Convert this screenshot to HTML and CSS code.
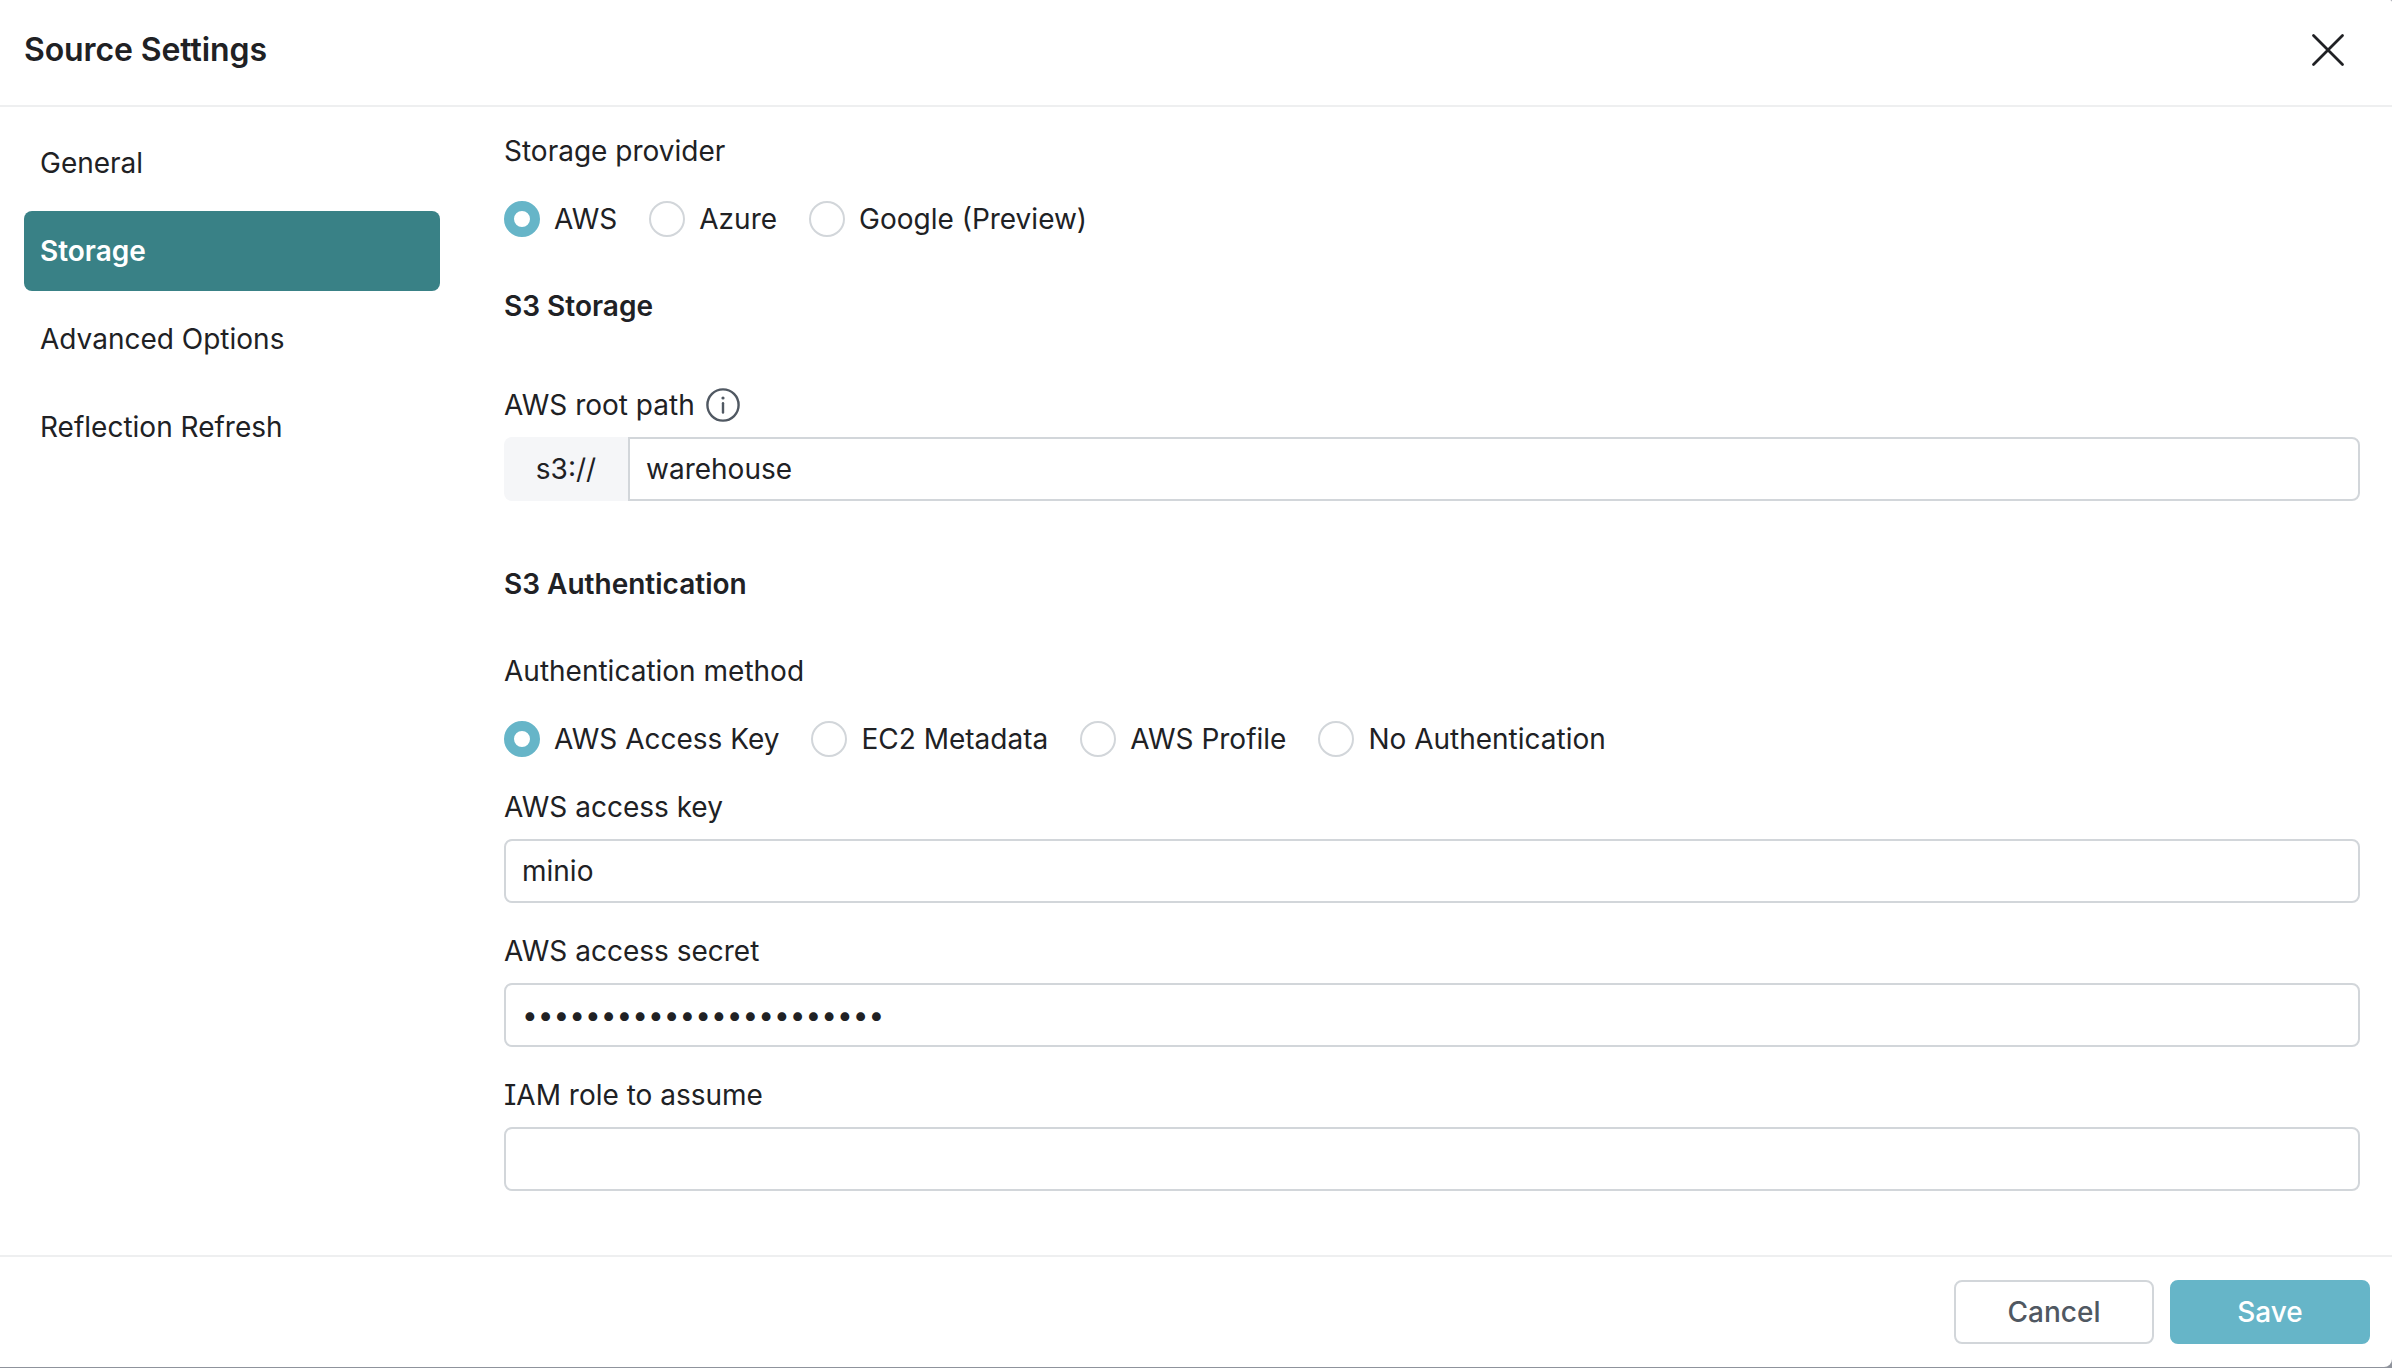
FILE: index.html
```html
<!DOCTYPE html>
<html lang="en">
<head>
<meta charset="utf-8">
<title>Source Settings</title>
<link rel="stylesheet" href="styles.css">
</head>
<body>
<div class="dialog">
  <header class="header">
    <h1 class="title">Source Settings</h1>
    <button class="close" type="button" aria-label="Close">
      <svg width="48" height="48" viewBox="0 0 48 48" fill="none" stroke="currentColor" stroke-width="2.8" stroke-linecap="round"><path d="M9.5 9.5 38.5 38.5M38.5 9.5 9.5 38.5"/></svg>
    </button>
  </header>
  <div class="body">
    <nav class="nav">
      <a class="nav-item">General</a>
      <a class="nav-item active">Storage</a>
      <a class="nav-item">Advanced Options</a>
      <a class="nav-item">Reflection Refresh</a>
    </nav>
    <main class="content">
      <section class="group">
        <div class="label">Storage provider</div>
        <div class="radios">
          <label class="radio"><span class="dot checked"></span><span>AWS</span></label>
          <label class="radio"><span class="dot"></span><span>Azure</span></label>
          <label class="radio"><span class="dot"></span><span>Google (Preview)</span></label>
        </div>
      </section>
      <h2 class="heading">S3 Storage</h2>
      <div class="field root-path">
        <div class="label">
          <span>AWS root path</span>
          <svg class="info" width="36" height="36" viewBox="0 0 36 36" fill="none" stroke="currentColor"><circle cx="18" cy="18" r="15.6" stroke-width="2.4"/><path d="M18 16.2V25.6" stroke-width="2.4" stroke-linecap="round"/><circle cx="18" cy="11" r="1.6" fill="currentColor" stroke="none"/></svg>
        </div>
        <div class="prefixed">
          <span class="prefix">s3://</span>
          <input class="input" type="text" value="warehouse">
        </div>
      </div>
      <h2 class="heading auth">S3 Authentication</h2>
      <section class="group">
        <div class="label">Authentication method</div>
        <div class="radios">
          <label class="radio"><span class="dot checked"></span><span>AWS Access Key</span></label>
          <label class="radio"><span class="dot"></span><span>EC2 Metadata</span></label>
          <label class="radio"><span class="dot"></span><span>AWS Profile</span></label>
          <label class="radio"><span class="dot"></span><span>No Authentication</span></label>
        </div>
      </section>
      <div class="fields">
        <div class="field">
          <div class="label">AWS access key</div>
          <input class="input" type="text" value="minio">
        </div>
        <div class="field">
          <div class="label">AWS access secret</div>
          <div class="input secret">•••••••••••••••••••••••</div>
        </div>
        <div class="field">
          <div class="label">IAM role to assume</div>
          <input class="input" type="text" value="">
        </div>
      </div>
    </main>
  </div>
  <footer class="footer">
    <button class="btn" type="button">Cancel</button>
    <button class="btn primary" type="button">Save</button>
  </footer>
</div>
</body>
</html>
```
FILE: styles.css
```css
* { box-sizing: border-box; }

body {
  margin: 0;
  background: #8f939c;
  color: #202124;
  font: 400 28px/36px Inter, "Liberation Sans", sans-serif;
  font-feature-settings: "cv08";
}

.dialog {
  display: flex;
  flex-direction: column;
  height: 1367px;
  background: #fff;
  border-radius: 0 2px 8px 0;
}

.header {
  display: flex;
  align-items: center;
  justify-content: space-between;
  height: 107px;
  padding: 0 40px 6px 24px;
  border-bottom: 2px solid #eeeff0;
}

.title { margin: 0; font-size: 32px; font-weight: 600; letter-spacing: -0.1px; }

.close {
  display: flex;
  padding: 0;
  border: 0;
  background: none;
  color: #202124;
}

.body { display: flex; flex: 1; min-height: 0; }

.nav {
  display: flex;
  flex-direction: column;
  gap: 8px;
  width: 440px;
  padding: 16px 0 0 24px;
}

.nav-item {
  height: 80px;
  padding: 0 16px;
  border-radius: 8px;
  line-height: 80px;
}

.nav-item.active { background: #398186; color: #fff; font-weight: 600; }

.content { flex: 1; padding: 26px 32px 0 64px; }

.group { display: flex; flex-direction: column; gap: 32px; }

.label { display: flex; align-items: center; gap: 10px; height: 36px; }

.radios { display: flex; gap: 32px; }

.radio { display: flex; align-items: center; gap: 14px; }

.dot {
  width: 36px;
  height: 36px;
  border: 2px solid #d2d6da;
  border-radius: 50%;
}

.dot.checked { border: 10px solid #66b5c8; }

.heading { margin: 51px 0 63px; font-size: 28px; font-weight: 600; line-height: 36px; }

.heading.auth { margin: 65px 0 51px; }

.info { color: #505862; }

.field { display: flex; flex-direction: column; gap: 14px; }

.fields { display: flex; flex-direction: column; gap: 30px; margin-top: 32px; }

.input {
  width: 100%;
  height: 64px;
  padding: 0 16px;
  border: 2px solid #d2d6da;
  border-radius: 8px;
  outline: 0;
  background: #fff;
  color: inherit;
  font: inherit;
  font-feature-settings: inherit;
}

.secret { line-height: 60px; }

.prefixed { display: flex; }

.prefix {
  width: 124px;
  border-radius: 8px 0 0 8px;
  background: #f5f6f8;
  line-height: 64px;
  text-align: center;
}

.prefixed .input { flex: 1; border-radius: 0 8px 8px 0; }

.footer {
  display: flex;
  justify-content: flex-end;
  gap: 16px;
  height: 112px;
  padding: 23px 22px 0;
  border-top: 2px solid #eeeff0;
}

.btn {
  width: 200px;
  height: 64px;
  padding: 0;
  border: 2px solid #d2d6da;
  border-radius: 8px;
  background: #fff;
  color: #505862;
  font: inherit;
  font-weight: 500;
}

.btn.primary { border-color: #66b5c8; background: #66b5c8; color: #fff; }
```
